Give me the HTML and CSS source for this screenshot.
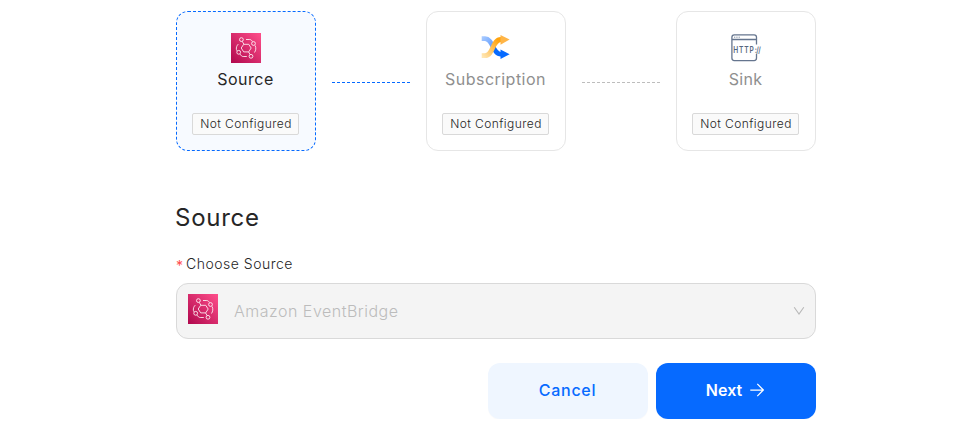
FILE: index.html
```html
<!DOCTYPE html>
<html lang="en">
<head>
<meta charset="utf-8">
<title>Source</title>
<link rel="stylesheet" href="styles.css">
</head>
<body>
<svg class="defs" width="0" height="0" aria-hidden="true">
  <defs>
    <linearGradient id="pink" x1="0" y1="1" x2="1" y2="0"><stop offset="0" stop-color="#b0084d"/><stop offset="1" stop-color="#ff4f8b"/></linearGradient>
    <linearGradient id="blue" gradientUnits="userSpaceOnUse" x1="1" y1="4" x2="22" y2="23"><stop offset="0" stop-color="#a9cbff"/><stop offset=".42" stop-color="#6ea5ff"/><stop offset=".6" stop-color="#066aff"/></linearGradient>
    <linearGradient id="gold" gradientUnits="userSpaceOnUse" x1="1" y1="23" x2="20" y2="4"><stop offset="0" stop-color="#ffe7b5"/><stop offset=".55" stop-color="#ffb945"/><stop offset=".85" stop-color="#ffa30d"/></linearGradient>
    <symbol id="bridge" viewBox="0 0 30 30">
      <rect width="30" height="30" fill="url(#pink)"/>
      <g fill="none" stroke="#fff" stroke-width=".9" stroke-opacity=".9">
        <path d="M12.7 11.3h5l2.5 3.7-2.5 3.9h-5L10.200 15zM12.900 11.200l-1.700-2.900M17.600 19l1.600 2.600M15 6.500h3.700c1.200 0 2 .8 2.700 2M24.200 12.500c1 2.700.7 4.900-.7 7M15.800 23.500h-3.600c-1.300 0-2.400-1-3.100-2.400M7.300 11.100c-1.400 1.300-2.200 3.300-1.900 5.300.1.700.4 1.100 1 1.600"/>
        <circle cx="10.400" cy="6.600" r="1.900"/><circle cx="22.500" cy="10.500" r="1.900"/><circle cx="7.700" cy="19.300" r="1.900"/><circle cx="20" cy="23.300" r="1.900"/>
      </g>
    </symbol>
  </defs>
</svg>
<main class="page">
  <div class="steps">
    <section class="card active">
      <svg class="icon" width="30" height="30"><use href="#bridge"/></svg>
      <div class="name">Source</div>
      <div class="tag">Not Configured</div>
    </section>
    <div class="line active-line"></div>
    <section class="card">
      <svg class="icon" width="30" height="30" viewBox="0 0 30 30">
        <path d="M.7 5.600H4C12 5.600 11.500 21.300 20 21.300" fill="none" stroke="url(#blue)" stroke-width="4.600"/>
        <path d="M19.500 16.400 28.600 21.300 19.500 26.100z" fill="#066aff"/>
        <path d="M.7 22.600H4C12.500 22.600 11 6.500 20 6.500" fill="none" stroke="url(#gold)" stroke-width="4.800"/>
        <path d="M19.500 2 28.600 6.500 19.500 11.700z" fill="#ffb547"/>
      </svg>
      <div class="name">Subscription</div>
      <div class="tag">Not Configured</div>
    </section>
    <div class="line"></div>
    <section class="card">
      <svg class="icon" width="30" height="30" viewBox="0 0 30 30">
        <path d="M25.500 11.500V4.200c0-1.600-.8-2.400-2.400-2.400H3.300C1.700 1.800.9 2.600.9 4.200v20.900c0 1.700.8 2.500 2.400 2.500h19.800c1.600 0 2.400-.8 2.400-2.500V21M1 6.500h24.500" fill="none" stroke="#65758e" stroke-width="1.300"/>
        <path d="M3 4.200h1.300M5.300 4.200h1.300M7.600 4.200h1.300" stroke="#65758e" stroke-width=".8"/>
        <text class="http" transform="translate(2.300 19.700) scale(.78 1)">HTTP<tspan class="slashes">://</tspan></text>
      </svg>
      <div class="name sink-name">Sink</div>
      <div class="tag">Not Configured</div>
    </section>
  </div>
  <h1 class="title">Source</h1>
  <div class="label"><span class="required">*</span><span>Choose Source</span></div>
  <div class="select">
    <svg width="30" height="30"><use href="#bridge"/></svg>
    <span class="value">Amazon EventBridge</span>
    <svg class="arrow" width="12" height="10" viewBox="0 0 12 10"><path d="M1.200 1.300 6 8l4.800-6.700" fill="none" stroke="#b8b8b8" stroke-width="1.100"/></svg>
  </div>
  <div class="actions">
    <button class="button cancel">Cancel</button>
    <button class="button next"><span>Next</span><svg width="14" height="14" viewBox="0 0 14 14"><path d="M.3 7h12.900M7.300.900l6 6.100-6 6.100" fill="none" stroke="#fff" stroke-width="1.250"/></svg></button>
  </div>
</main>
</body>
</html>
```

FILE: styles.css
```css
* { box-sizing: border-box; }
body { margin: 0; background: #fff; color: #262626; font-family: Inter, "Open Sans", sans-serif; }
.defs { display: block; height: 0; }
.page { width: 640px; margin-left: 176px; padding-top: 11px; }
.steps { display: flex; align-items: center; justify-content: space-between; }
.card { width: 140px; height: 140px; padding: 21px 1px 0 0; border: 1px solid #e6e6e6; border-radius: 12px; display: flex; flex-direction: column; align-items: center; }
.card.active { background: #f7faff; border: 1px dashed #066aff; }
.icon { display: block; flex: none; overflow: visible; }
.name { height: 24px; margin-top: 4px; font-size: 16px; line-height: 24px; letter-spacing: .48px; color: #8f8f8f; font-weight: 400; white-space: nowrap; }
.sink-name { letter-spacing: .25px; }
.active .name { color: #262626; }
.tag { width: 107px; height: 22px; margin-top: 22px; padding-left: 1px; border: 1px solid #d9d9d9; border-radius: 2px; background: #fafafa; color: #262626; font-size: 12px; line-height: 20px; letter-spacing: .43px; text-align: center; font-weight: 300; white-space: nowrap; }
.line { width: 78px; height: 1px; margin-top: 3px; background: repeating-linear-gradient(90deg, #bdbdbd 0 3px, transparent 3px 5px); }
.active-line { background: repeating-linear-gradient(90deg, #066aff 0 3px, transparent 3px 5px); }
.http { font: 600 8.500px Inter, sans-serif; letter-spacing: 1.100px; fill: #566780; }
.slashes { letter-spacing: -.7px; }
.title { margin: 49px 0 0 -1px; font-size: 24px; line-height: 36px; letter-spacing: .75px; font-weight: 400; }
.label { display: flex; height: 22px; margin-top: 17px; font-size: 14px; line-height: 22px; letter-spacing: .5px; font-weight: 300; }
.required { width: 10px; color: #ff4d4f; font-size: 14px; line-height: 25px; font-weight: 400; }
.select { display: flex; align-items: center; height: 56px; margin-top: 8px; padding: 0 10px 4px 11px; border: 1px solid #d9d9d9; border-radius: 12px; background: #f4f4f4; }
.value { margin: 4px 0 0 16px; font-size: 16px; letter-spacing: .5px; color: #bcbcbc; font-weight: 300; white-space: nowrap; }
.arrow { margin: 4px 0 0 auto; }
.actions { display: flex; justify-content: flex-end; gap: 8px; margin-top: 24px; }
.button { display: flex; align-items: center; justify-content: center; width: 160px; height: 56px; padding: 0 1px 2px 0; border: 0; border-radius: 12px; font: 500 16px Inter, sans-serif; box-shadow: 0 1px 1px #00000005; }
.cancel { background: #eff6ff; color: #066aff; letter-spacing: .7px; }
.next { padding-right: 2px; background: #066aff; color: #fff; gap: 8px; font-weight: 600; }
```
